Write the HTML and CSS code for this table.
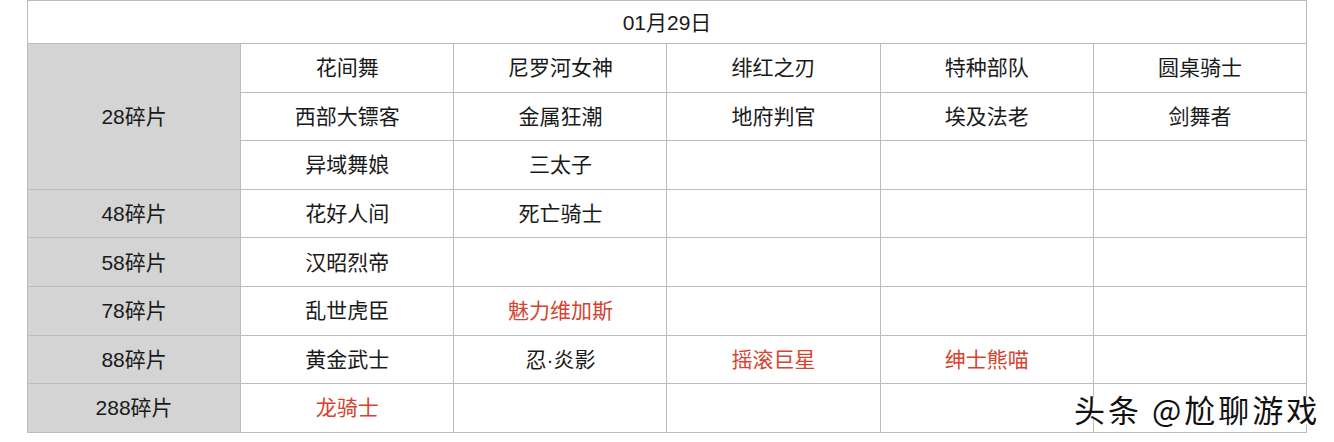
FILE: index.html
```html
<!DOCTYPE html>
<html lang="zh">
<head>
<meta charset="utf-8">
<link rel="stylesheet" href="styles.css">
</head>
<body>
<div class="page">
<table class="grid">
  <colgroup>
    <col class="c"><col class="c"><col class="c"><col class="c"><col class="c"><col class="c">
  </colgroup>
  <tr class="head"><td colspan="6">01月29日</td></tr>
  <tr><td class="label" rowspan="3">28碎片</td><td>花间舞</td><td>尼罗河女神</td><td>绯红之刃</td><td>特种部队</td><td>圆桌骑士</td></tr>
  <tr><td>西部大镖客</td><td>金属狂潮</td><td>地府判官</td><td>埃及法老</td><td>剑舞者</td></tr>
  <tr><td>异域舞娘</td><td>三太子</td><td></td><td></td><td></td></tr>
  <tr><td class="label">48碎片</td><td>花好人间</td><td>死亡骑士</td><td></td><td></td><td></td></tr>
  <tr><td class="label">58碎片</td><td>汉昭烈帝</td><td></td><td></td><td></td><td></td></tr>
  <tr><td class="label">78碎片</td><td>乱世虎臣</td><td class="red">魅力维加斯</td><td></td><td></td><td></td></tr>
  <tr><td class="label">88碎片</td><td>黄金武士</td><td>忍·炎影</td><td class="red">摇滚巨星</td><td class="red">绅士熊喵</td><td></td></tr>
  <tr><td class="label">288碎片</td><td class="red">龙骑士</td><td></td><td></td><td></td><td></td></tr>
</table>
<div class="watermark">头条 @尬聊游戏</div>
</div>
</body>
</html>
```
FILE: styles.css
```css
html, body {
  margin: 0;
  padding: 0;
  background: #fff;
}
.page {
  position: relative;
  width: 1334px;
  height: 442px;
  overflow: hidden;
}
.grid {
  margin-left: 27px;
  width: 1280px;
  border-collapse: collapse;
  table-layout: fixed;
  font-family: "Liberation Sans", "Noto Sans CJK SC", sans-serif;
  font-size: 21px;
  color: #1a1a1a;
}
.grid td {
  border: 1px solid #bcbcbc;
  text-align: center;
  vertical-align: middle;
  padding: 0;
  height: 47.6px;
  line-height: 1;
}
.grid tr.head td {
  height: 42px;
}
.grid td.label {
  background: #d4d4d4;
}
.grid td.red {
  color: #d6432f;
}
.watermark {
  position: absolute;
  left: 1074px;
  top: 390px;
  font-family: "Noto Sans CJK SC", sans-serif;
  font-size: 31px;
  letter-spacing: 3px;
  line-height: 1.2;
  color: #111;
  text-shadow: 1px 1px 0 #fff, 2px 2px 0 #fff, -1px 0 0 #fff, 0 -1px 0 #fff;
  white-space: nowrap;
}
```
